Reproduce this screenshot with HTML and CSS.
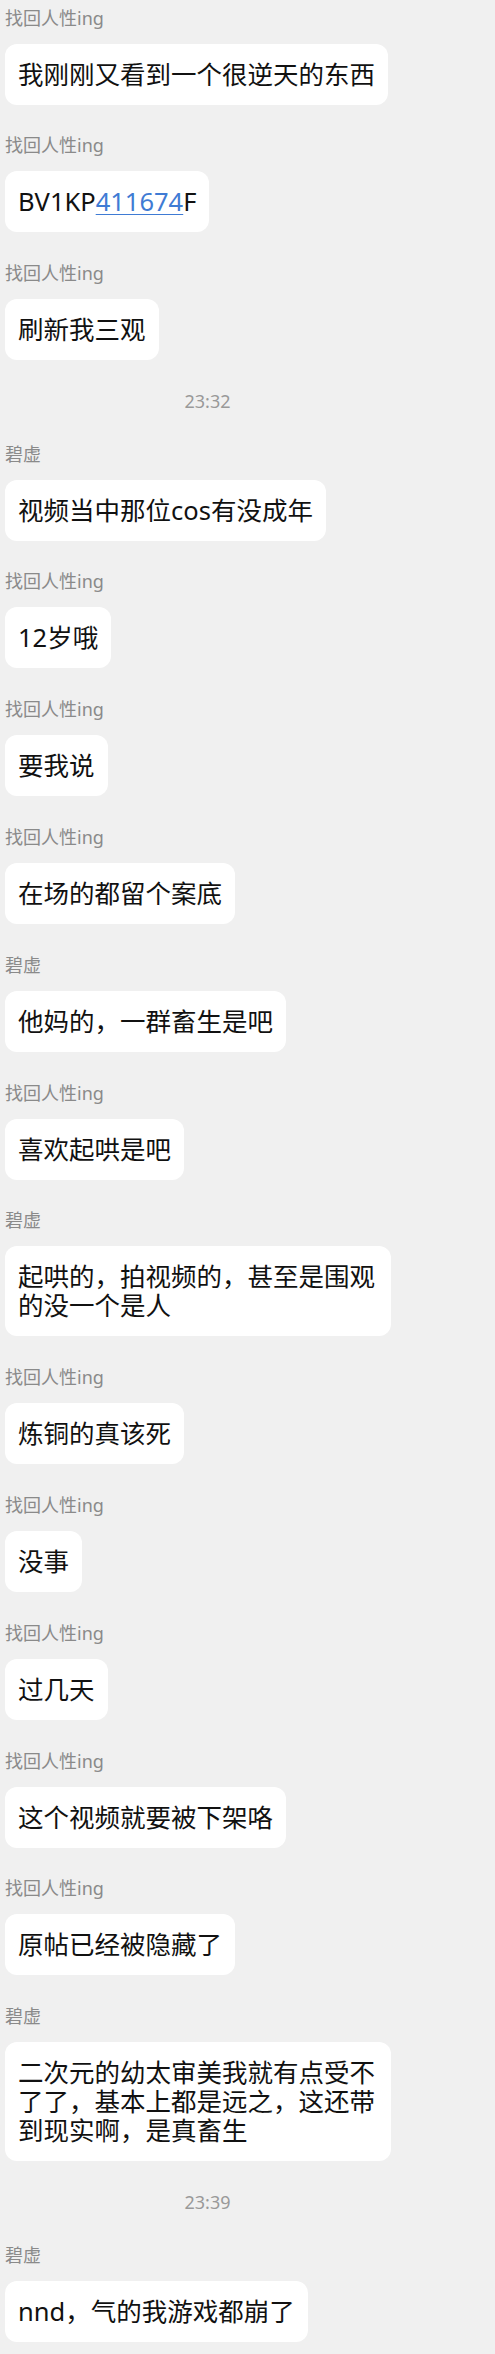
FILE: index.html
```html
<!DOCTYPE html>
<html lang="zh-CN">
<head>
<meta charset="utf-8">
<link rel="stylesheet" href="styles.css">
</head>
<body>
<main class="chat">
  <div class="msg"><div class="name">找回人性ing</div><div class="bubble">我刚刚又看到一个很逆天的东西</div></div>
  <div class="msg"><div class="name">找回人性ing</div><div class="bubble">BV1KP<span class="link">411674</span>F</div></div>
  <div class="msg"><div class="name">找回人性ing</div><div class="bubble">刷新我三观</div></div>
  <div class="time">23:32</div>
  <div class="msg"><div class="name">碧虚</div><div class="bubble">视频当中那位cos有没成年</div></div>
  <div class="msg"><div class="name">找回人性ing</div><div class="bubble">12岁哦</div></div>
  <div class="msg"><div class="name">找回人性ing</div><div class="bubble">要我说</div></div>
  <div class="msg"><div class="name">找回人性ing</div><div class="bubble">在场的都留个案底</div></div>
  <div class="msg"><div class="name">碧虚</div><div class="bubble">他妈的，一群畜生是吧</div></div>
  <div class="msg"><div class="name">找回人性ing</div><div class="bubble">喜欢起哄是吧</div></div>
  <div class="msg"><div class="name">碧虚</div><div class="bubble">起哄的，拍视频的，甚至是围观的没一个是人</div></div>
  <div class="msg"><div class="name">找回人性ing</div><div class="bubble">炼铜的真该死</div></div>
  <div class="msg"><div class="name">找回人性ing</div><div class="bubble">没事</div></div>
  <div class="msg"><div class="name">找回人性ing</div><div class="bubble">过几天</div></div>
  <div class="msg"><div class="name">找回人性ing</div><div class="bubble">这个视频就要被下架咯</div></div>
  <div class="msg"><div class="name">找回人性ing</div><div class="bubble">原帖已经被隐藏了</div></div>
  <div class="msg"><div class="name">碧虚</div><div class="bubble">二次元的幼太审美我就有点受不了了，基本上都是远之，这还带到现实啊，是真畜生</div></div>
  <div class="time">23:39</div>
  <div class="msg"><div class="name">碧虚</div><div class="bubble">nnd，气的我游戏都崩了</div></div>
</main>
</body>
</html>
```

FILE: styles.css
```css
html, body {
  margin: 0;
  padding: 0;
  background: #f0f0f0;
}
body {
  font-family: "Noto Sans", "Noto Sans CJK SC", sans-serif;
  color: #111;
}
.chat {
  display: flex;
  flex-direction: column;
  gap: 28.8px;
  padding: 5.5px 5px 12px 5px;
}
.msg {
  display: flex;
  flex-direction: column;
  align-items: flex-start;
  gap: 14px;
}
.name {
  font-size: 18px;
  line-height: 24px;
  height: 24px;
  color: #8a8a8a;
  padding-left: 0;
}
.bubble {
  background: #fff;
  border-radius: 12px;
  padding: 16px 13px;
  font-size: 25.5px;
  line-height: 29px;
  max-width: 386px;
  box-sizing: border-box;
  word-break: break-all;
}
.link {
  color: #3f7bd4;
  text-decoration: underline;
  text-decoration-thickness: 1px;
  text-underline-offset: 3px;
}
.time {
  width: 405px;
  text-align: center;
  font-size: 18px;
  line-height: 24px;
  height: 24px;
  color: #999;
}
```
